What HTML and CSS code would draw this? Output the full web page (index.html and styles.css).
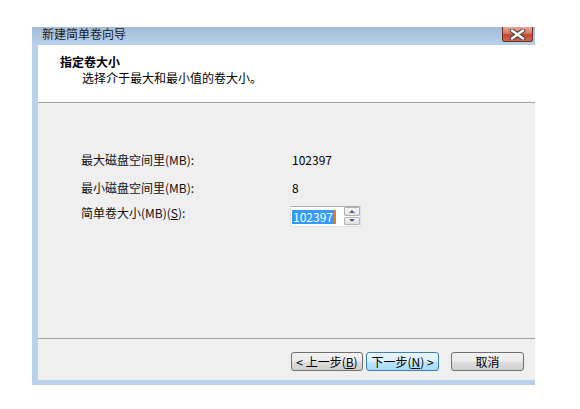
FILE: index.html
```html
<!DOCTYPE html>
<html lang="zh-CN">
<head>
  <meta charset="UTF-8">
  <title>新建简单卷向导</title>
  <link rel="stylesheet" href="styles.css">
</head>
<body>

  <div class="window">
    <div class="titlebar">
      <span class="title">新建简单卷向导</span>
      <button class="close-btn">
        <svg width="17" height="11" viewBox="0 0 17 11">
          <path d="M3 1.5 L14 9.5 M14 1.5 L3 9.5" stroke="#3a3a3a" stroke-width="4.4" stroke-linecap="round"/>
          <path d="M3 1.5 L14 9.5 M14 1.5 L3 9.5" stroke="#ffffff" stroke-width="2.6" stroke-linecap="round"/>
        </svg>
      </button>
    </div>

    <div class="client">
      <div class="header">
        <div class="header-title">指定卷大小</div>
        <div class="header-sub">选择介于最大和最小值的卷大小。</div>
      </div>

      <div class="content">
        <div class="row">
          <span class="label">最大磁盘空间里(MB):</span>
          <span class="value">102397</span>
        </div>
        <div class="row">
          <span class="label">最小磁盘空间里(MB):</span>
          <span class="value">8</span>
        </div>
        <div class="row size-row">
          <span class="label">简单卷大小(MB)(<u>S</u>):</span>
          <div class="spin-box">
            <span class="spin-text"><span class="selected">102397</span></span>
            <div class="spinner">
              <span class="spin-btn"><i class="arrow-up"></i></span>
              <span class="spin-btn"><i class="arrow-down"></i></span>
            </div>
          </div>
        </div>
      </div>

      <div class="footer">
        <button class="btn back">&lt; 上一步(<u>B</u>)</button>
        <button class="btn next">下一步(<u>N</u>) &gt;</button>
        <button class="btn cancel">取消</button>
      </div>
    </div>
  </div>

</body>
</html>
```

FILE: styles.css
```css
body {
  margin: 0;
  background: #ffffff;
  font-family: "Noto Sans CJK SC", "Liberation Sans", sans-serif;
  font-size: 12px;
  color: #000000;
}
.window {
  margin: 27px 0 0 32px;
  width: 503px;
}
.titlebar {
  height: 18px;
  display: flex;
  justify-content: space-between;
  background: linear-gradient(#a2bcd8, #b9d1ea);
  padding-left: 10px;
}
.title {
  line-height: 14px;
  color: #1a1a1a;
}
.close-btn {
  width: 31px;
  height: 15px;
  margin-right: 2px;
  padding: 0;
  border: 1px solid #6b2c24;
  border-top: none;
  border-radius: 0 0 3px 3px;
  background: linear-gradient(#e9a898, #d67a63 45%, #c2462c 55%, #cf6a4f);
  display: flex;
  align-items: center;
  justify-content: center;
}
.client {
  border-left: 6px solid #b9d1ea;
  border-bottom: 5px solid #b9d1ea;
  background: #efefef;
}
.header {
  height: 58px;
  background: #ffffff;
  border-bottom: 1px solid #a0a0a0;
  padding: 9px 0 0 22px;
  box-sizing: border-box;
  line-height: 16px;
}
.header-title {
  font-weight: bold;
}
.header-sub {
  padding-left: 22px;
}
.content {
  height: 235px;
  box-sizing: border-box;
  padding: 49px 0 0 43px;
  line-height: 16px;
}
.row {
  display: flex;
  align-items: flex-start;
}
.row + .row {
  margin-top: 12px;
}
.row.size-row {
  margin-top: 9px;
}
.label {
  width: 211px;
  color: #111111;
}
.spin-box {
  width: 71px;
  height: 21px;
  margin: 1px 0 0 -2px;
  box-sizing: border-box;
  background: #ffffff;
  border: 1px solid #dde2e8;
  border-top-color: #abadb3;
  display: flex;
  justify-content: space-between;
}
.spin-text {
  padding: 2px 0 0 1px;
}
.selected {
  display: inline-block;
  background: #3399ff;
  color: #ffffff;
  line-height: 14px;
  padding: 0 1px;
  border-right: 2px solid #e87a1c;
}
.spinner {
  width: 16px;
  display: flex;
  flex-direction: column;
  gap: 1px;
  padding: 0 0 1px;
}
.spin-btn {
  flex: 1;
  border: 1px solid #b2b2b2;
  border-radius: 1px;
  background: linear-gradient(#f6f6f6, #e2e2e2);
  display: flex;
  align-items: center;
  justify-content: center;
}
.arrow-up, .arrow-down {
  width: 0;
  height: 0;
  border-left: 3px solid transparent;
  border-right: 3px solid transparent;
}
.arrow-up {
  border-bottom: 3px solid #4d6185;
}
.arrow-down {
  border-top: 3px solid #4d6185;
}
.footer {
  border-top: 1px solid #a0a0a0;
  height: 42px;
  box-sizing: border-box;
  padding: 13px 11px 0 0;
  display: flex;
  justify-content: flex-end;
  align-items: flex-start;
}
.btn {
  height: 19px;
  width: 73px;
  padding: 0;
  font-family: inherit;
  font-size: 12px;
  line-height: 15px;
  color: #000000;
  border: 1px solid #707070;
  border-radius: 3px;
  background: linear-gradient(#f2f2f2 0%, #ebebeb 50%, #dddddd 51%, #cfcfcf 100%);
}
.btn.back {
  width: 72px;
}
.btn.next {
  margin-left: 3px;
  border-color: #3c7fb1;
  background: linear-gradient(#eaf6fd 0%, #d9f0fc 50%, #bee6fd 51%, #a7d9f5 100%);
}
.btn.cancel {
  margin-left: 12px;
}
```
